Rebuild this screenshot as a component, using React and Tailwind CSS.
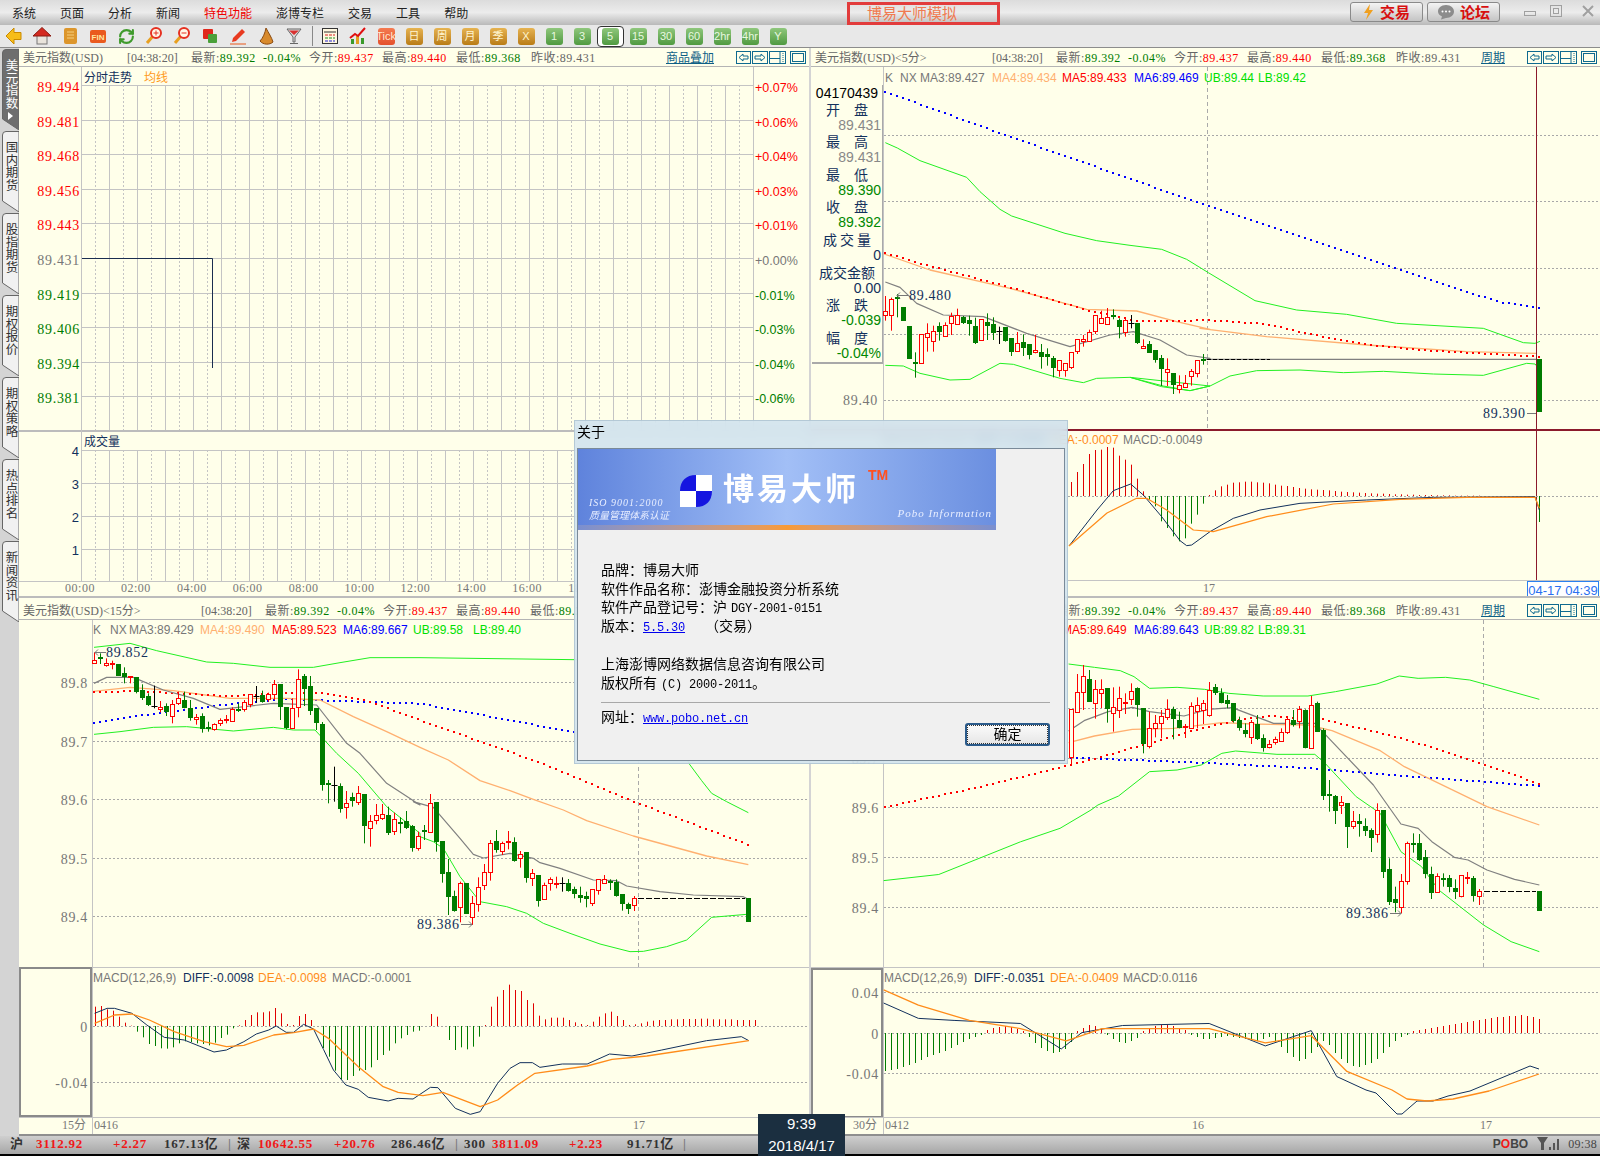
import { RefreshCw } from "lucide-react";

const PANEL = "#ffffea";
const GRID = "#c4c4c4";
const DOT = "#a8a8a8";
const NAVY = "#12305c";
const GREEN = "#007c00";
const BAND = "#22f022";
const SERIF = "[font-family:'Liberation_Serif','Noto_Sans_CJK_SC',serif]";

// reads points off the reference crops: crop position -> page position
const toPage = (ox, oy, sx, sy, list) => list.map(([x, y]) => [ox + x / sx, oy + y / sy]);

function Line({ pts, color, w = 1, dash }) {
	return (
		<polyline
			points={pts.map((p) => p.join(",")).join(" ")}
			fill="none"
			stroke={color}
			strokeWidth={w}
			strokeDasharray={dash}
			strokeLinejoin="round"
		/>
	);
}

// square dots every 6px along the line, the way the terminal plots MA lines
function Dotted({ pts, color }) {
	const dots = [];
	for (let i = 0; i < pts.length - 1; i++) {
		const [x1, y1] = pts[i];
		const [x2, y2] = pts[i + 1];
		let x = dots.length ? dots[dots.length - 1][0] + 6 : x1;
		while (x <= x2) {
			dots.push([x, y1 + ((y2 - y1) * (x - x1)) / (x2 - x1)]);
			x += 6;
		}
	}
	return dots.map(([x, y], i) => <rect key={i} x={Math.round(x)} y={Math.round(y)} width={2} height={2} fill={color} />);
}

function T({ x, y, c = "#666", size = 12, anchor = "start", serif, track, children }) {
	return (
		<text
			x={x}
			y={y}
			fill={c}
			fontSize={size}
			textAnchor={anchor}
			dominantBaseline="central"
			letterSpacing={track}
			className={serif ? SERIF : undefined}
		>
			{children}
		</text>
	);
}

function Price({ x, y, c = "#777", children }) {
	return (
		<T x={x} y={y} c={c} size={14} anchor="end" serif track={0.7}>
			{children}
		</T>
	);
}

function Arrow({ x1, x2, y }) {
	const head = x2 > x1 ? -3 : 3;
	return (
		<path d={`M${x1} ${y + 0.5} H${x2} M${x2 + head} ${y - 2.5} L${x2} ${y + 0.5} L${x2 + head} ${y + 3.5}`} fill="none" stroke="#777" />
	);
}

function HDots({ ys, x1, x2 }) {
	return ys.map((y) => <line key={y} x1={x1} x2={x2} y1={y + 0.5} y2={y + 0.5} stroke={DOT} strokeDasharray="2 2" />);
}

// [type, bodyTop, bodyBottom, high, low] in crop pixels
function Candles({ data, x0, step, oy, s = 3 }) {
	return data.map(([t, top, bot, hi, lo], i) => {
		const x = Math.round(x0 + i * step) + 0.5;
		const y1 = Math.round(oy + top / s);
		const y2 = Math.round(oy + bot / s);
		const yh = oy + hi / s;
		const yl = oy + lo / s;
		if (t === "k") {
			return (
				<g key={i} stroke="#000">
					<line x1={x} x2={x} y1={yh} y2={yl} />
					<line x1={x - 3} x2={x + 3} y1={y1 + 0.5} y2={y1 + 0.5} />
				</g>
			);
		}
		const color = t === "r" ? "#ff0000" : GREEN;
		return (
			<g key={i}>
				<line x1={x} x2={x} y1={yh} y2={yl} stroke={color} />
				{t === "r" ? (
					<rect x={x - 2} y={y1 + 0.5} width={4} height={Math.max(y2 - y1, 1)} fill={PANEL} stroke={color} />
				) : (
					<rect x={x - 2.5} y={y1} width={5} height={Math.max(y2 - y1, 2)} fill={color} />
				)}
			</g>
		);
	});
}

function Bars({ data, x0, base, k = 1 }) {
	return data.map((h, i) => {
		if (!h) return null;
		const x = Math.round(x0 + i * 6) + 0.5;
		return <line key={i} x1={x} x2={x} y1={base} y2={base - h * k} stroke={h > 0 ? "#e00000" : GREEN} />;
	});
}

function MaLegend({ y, xs, vals }) {
	return (
		<>
			<T x={xs[0]} y={y} c="#777">K</T>
			<T x={xs[1]} y={y} c="#777">NX</T>
			<T x={xs[2]} y={y} c="#777">MA3:{vals[0]}</T>
			<T x={xs[3]} y={y} c="#ffb070">MA4:{vals[1]}</T>
			<T x={xs[4]} y={y} c="#ff0000">MA5:{vals[2]}</T>
			<T x={xs[5]} y={y} c="#0000ff">MA6:{vals[3]}</T>
			<T x={xs[6]} y={y} c="#00e000">UB:{vals[4]}</T>
			<T x={xs[7]} y={y} c="#00e000">LB:{vals[5]}</T>
		</>
	);
}

function MacdLegend({ y, xs, vals }) {
	return (
		<>
			<T x={xs[0]} y={y} c="#777">MACD(12,26,9)</T>
			<T x={xs[1]} y={y} c={NAVY}>DIFF:{vals[0]}</T>
			<T x={xs[2]} y={y} c="#ff8c1a">DEA:{vals[1]}</T>
			<T x={xs[3]} y={y} c="#777">MACD:{vals[2]}</T>
		</>
	);
}

function WindowIcons() {
	return (
		<svg width="70" height="14" viewBox="0 0 70 14" fill="none" stroke="#0f6a8f">
			<rect x="0.5" y="0.5" width="14" height="12" />
			<path d="M3 6.5 L7 3 V5 H12 V8 H7 V10 Z" />
			<rect x="16.5" y="0.5" width="15" height="12" />
			<path d="M29 6.5 L25 3 V5 H19 V8 H25 V10 Z" />
			<rect x="33.5" y="0.5" width="16" height="12" />
			<path d="M33 7.5 H44 M44 1 V13" />
			<path d="M47 2 V12" strokeDasharray="1 1" />
			<rect x="54.5" y="0.5" width="15" height="12" />
			<rect x="56.5" y="2.5" width="11" height="8" />
		</svg>
	);
}

function Header({ title, titleW, link, tall }) {
	return (
		<div className={`${tall ? "h-[22px] pt-[4px]" : "h-[19px] pt-[2px]"} shrink-0 flex items-center pl-[4px] pr-[3px] border-b border-[#b4b4b4] text-[12px] text-[#666] whitespace-nowrap ${SERIF}`}>
			<div className={titleW}>{title}</div>
			<div className="w-[64px]">[04:38:20]</div>
			<div className="w-[72px] tracking-[0.5px]">最新:<span className="text-[#007c00]">89.392</span></div>
			<div className="w-[46px] tracking-[0.5px] text-[#007c00]">-0.04%</div>
			<div className="w-[73px] tracking-[0.5px]">今开:<span className="text-[#ff0000]">89.437</span></div>
			<div className="w-[74px] tracking-[0.5px]">最高:<span className="text-[#ff0000]">89.440</span></div>
			<div className="w-[75px] tracking-[0.5px]">最低:<span className="text-[#007c00]">89.368</span></div>
			<div className="tracking-[0.5px]">昨收:89.431</div>
			<div className="ml-auto mr-[22px] text-[#0f5f86] underline">{link}</div>
			<WindowIcons />
		</div>
	);
}

/* ---------- top left: time sharing ---------- */
const LEFT_PRICES = [
	["89.494", "#ff0000"], ["89.481", "#ff0000"], ["89.468", "#ff0000"], ["89.456", "#ff0000"], ["89.443", "#ff0000"],
	["89.431", "#777"], ["89.419", GREEN], ["89.406", GREEN], ["89.394", GREEN], ["89.381", GREEN],
];
const RIGHT_PCT = [
	["+0.07%", "#ff0000"], ["+0.06%", "#ff0000"], ["+0.04%", "#ff0000"], ["+0.03%", "#ff0000"], ["+0.01%", "#ff0000"],
	["+0.00%", "#777"], ["-0.01%", GREEN], ["-0.03%", GREEN], ["-0.04%", GREEN], ["-0.06%", GREEN],
];
const TIMES = ["00:00", "02:00", "04:00", "06:00", "08:00", "10:00", "12:00", "14:00", "16:00", "18:00"];

function VLines({ y1, y2 }) {
	return Array.from({ length: 49 }).map((_, i) => {
		const x = 81.5 + i * 14;
		return (
			<line key={i} x1={x} x2={x} y1={y1} y2={y2} stroke={GRID} strokeDasharray={i % 2 ? "2 2" : undefined} />
		);
	});
}

function TopLeft() {
	return (
		<div className="flex flex-col" style={{ background: PANEL }}>
			<Header title="美元指数(USD)" titleW="w-[104px]" link="商品叠加" />
			<svg width="790" height="531" viewBox="19 67 790 531" className="block">
				<VLines y1={85} y2={431} />
				<VLines y1={450} y2={581} />
				{LEFT_PRICES.map(([v, c], i) => {
					const y = Math.round(85 + i * 34.6) + 0.5;
					return (
						<g key={v}>
							<line x1={81} x2={753} y1={y} y2={y} stroke={GRID} />
							<Price x={80} y={y + 2} c={c}>{v}</Price>
							<T x={755} y={y + 2} c={RIGHT_PCT[i][1]} size={12.5}>{RIGHT_PCT[i][0]}</T>
						</g>
					);
				})}
				<line x1={753.5} x2={753.5} y1={67} y2={431} stroke={GRID} />
				<T x={84} y={78} c={NAVY}>分时走势</T>
				<T x={144} y={78} c="#ff9a1a">均线</T>
				<Line pts={[[81, 258.5], [212.5, 258.5], [212.5, 368]]} color="#1a2d50" />
				<rect x={19} y={430} width={790} height={2} fill="#bcbcbc" />
				<T x={84} y={442} c={NAVY}>成交量</T>
				{[["4", 450], ["3", 483], ["2", 516], ["1", 549]].map(([v, y]) => (
					<g key={v}>
						<line x1={81} x2={753} y1={y + 0.5} y2={y + 0.5} stroke={GRID} />
						<T x={79} y={y + 1} c={NAVY} size={13} anchor="end">{v}</T>
					</g>
				))}
				<line x1={81.5} x2={81.5} y1={67} y2={581} stroke={GRID} />
				<line x1={19} x2={809} y1={581.5} y2={581.5} stroke={GRID} />
				{TIMES.map((t, i) => (
					<T key={t} x={80 + i * 55.9} y={588} c="#777" anchor="middle" serif track={0.5}>{t}</T>
				))}
				<rect x={19} y={596} width={790} height={2} fill="#bcbcbc" />
			</svg>
		</div>
	);
}

/* ---------- top right: 5 min ---------- */
const TR_CANDLES = [
	["r",723,735,678,752],["r",688,736,683,782],["g",680,688,672,742],["g",712,752,712,752],["g",768,866,768,866],["g",877,880,847,923],
	["r",793,878,793,878],["r",788,800,760,845],["r",782,812,767,845],["g",769,787,757,812],["r",764,797,757,797],["r",738,760,728,795],
	["r",734,763,716,763],["g",741,759,738,762],["g",751,761,737,797],["g",768,820,743,822],["r",748,811,748,811],["g",757,769,730,810],
	["g",763,788,742,810],["k",783,784,770,822],["g",771,812,771,815],["g",805,846,805,858],["r",820,842,786,842],["g",817,833,793,858],
	["g",823,855,823,868],["r",841,847,794,850],["g",846,860,822,896],["g",853,860,835,887],["g",865,893,858,922],["r",871,899,871,920],
	["r",880,899,880,920],["r",847,892,847,897],["r",808,844,808,852],["r",808,812,795,830],["r",787,812,779,812],["r",736,784,736,792],
	["r",744,760,722,762],["r",741,761,714,762],["g",736,741,718,748],["g",751,770,745,805],["r",751,787,745,800],["k",758,759,735,775],
	["g",760,818,760,822],["r",829,833,808,835],["g",823,848,813,848],["g",840,870,840,878],["g",865,896,855,948],["r",898,907,865,948],
	["g",909,946,909,972],["r",946,956,916,970],["r",940,952,915,952],["r",904,918,897,947],["r",871,910,871,922],["g",866,869,852,884],
];
const a = (l) => toPage(810, 70, 3, 3, l);
const b = (l) => toPage(1100, 300, 3, 3, l);
const TR_UB = [
	...a([[226,218],[262,234],[330,272],[470,322],[510,365],[570,418],[605,438],[765,490],[860,512],[960,526],[1055,538],[1130,568],[1195,608]]),
	...b([[465,2],[590,30],[740,43],[890,70],[1150,85],[1270,128],[1305,130],[1320,124]]),
];
const TR_LB = [
	...a([[226,886],[280,888],[330,910],[420,930],[480,928],[570,880],[610,883],[750,925],[820,938],[860,925],[960,922],[1060,948],[1140,962],[1200,948]]),
	...b([[90,232],[185,260],[270,272],[330,258],[390,228],[470,212],[600,210],[730,218],[850,214],[1000,222],[1150,226],[1280,190],[1305,192],[1320,210]]),
];
const TR_GRAY = [
	...a([[226,636],[270,652],[320,700],[400,735],[520,740],[650,790],[780,830],[900,795],[970,785],[1050,810],[1130,855],[1200,865]]),
	...b([[320,178],[1310,178]]),
];
const TR_ORANGE = [
	...a([[222,552],[360,600],[600,655],[830,718],[980,723],[1100,755],[1200,778]]),
	...b([[300,85],[500,110],[800,135],[1100,155],[1310,160]]),
];
const TR_RED = [
	...a([[222,545],[330,578],[600,650],[830,718],[980,750],[1200,748]]),
	...b([[400,62],[500,70],[620,98],[800,132],[1000,150],[1318,167]]),
];
const TR_BLUE = [...a([[222,62],[600,198],[1190,405]]), ...b([[1190,2],[1318,22]])];
const TR_MACD_Y = [
	450,442,444,468,480,495,537,575,600,620,665,685,710,725,716,672,645,612,586,572,560,555,549,548,546,546,548,549,551,555,558,559,
	562,565,567,569,570,571,572,574,576,577,578,579,580,581,582,582,583,584,584,585,585,586,586,586,587,587,587,588,588,588,588,588,
];
const TR_DIFF = [[1069,546],[1097,510],...b([[40,572],[92,552],[130,585],[185,650],[240,722],[260,737],[275,735],[330,695],[400,655],[480,630],[600,610],[800,600],[1000,592],[1305,590],[1318,630]])];
const TR_DEA = [[1069,546],[1107,513],...b([[110,595],[140,595],[200,630],[280,690],[340,695],[500,650],[700,612],[900,598],[1100,592],[1305,592],[1318,625]])];

function InfoRow({ label, pad, value, c = "#888" }) {
	return (
		<>
			<div className={`mt-[2.6px] h-[16px] leading-[16px] flex justify-between text-[#12305c] text-[14px] ${pad}`}>
				{label.split("").map((ch) => (
					<span key={ch}>{ch}</span>
				))}
			</div>
			<div className="h-[14px] leading-[14px] text-right text-[14px]" style={{ color: c }}>{value}</div>
		</>
	);
}

function TopRight() {
	return (
		<div className="relative flex flex-col" style={{ background: PANEL }}>
			<Header title="美元指数(USD)<5分>" titleW="w-[177px]" link="周期" />
			<svg width="789" height="531" viewBox="811 67 789 531" className="block">
				<HDots ys={[135, 201, 268, 334, 400]} x1={884} x2={1600} />
				<line x1={1207.5} x2={1207.5} y1={67} y2={430} stroke="#aaa" strokeDasharray="4 3" />
				<line x1={883.5} x2={883.5} y1={67} y2={581} stroke={GRID} />
				<MaLegend y={78} xs={[885, 900, 920, 992, 1062, 1134, 1204, 1258]} vals={["89.427", "89.434", "89.433", "89.469", "89.44", "89.42"]} />
				<Dotted pts={TR_BLUE} color="#0000ff" />
				<Line pts={TR_UB} color={BAND} />
				<Line pts={TR_LB} color={BAND} />
				<Line pts={TR_ORANGE} color="#ffb070" w={1.3} />
				<Dotted pts={TR_RED} color="#ff0000" />
				<Line pts={TR_GRAY} color="#808080" w={1.2} />
				<Candles data={TR_CANDLES} x0={885.3} step={6} oy={70} />
				<line x1={1207} x2={1270} y1={359.5} y2={359.5} stroke="#000" strokeDasharray="4 2" />
				<rect x={1537} y={359} width={5} height={53} fill={GREEN} />
				<Price x={878} y={400}>89.40</Price>
				<Arrow x1={908} x2={897} y={295} />
				<T x={909} y={295} c={NAVY} size={14} serif track={0.7}>89.480</T>
				<T x={1483} y={413} c={NAVY} size={14} serif track={0.7}>89.390</T>
				<line x1={1527} x2={1537} y1={413.5} y2={413.5} stroke="#777" />
				<rect x={811} y={429} width={789} height={2} fill="#8b1a2b" />
				<line x1={1536.5} x2={1536.5} y1={67} y2={580} stroke="#8b1a2b" />
				<HDots ys={[496]} x1={884} x2={1600} />
				<Bars data={[14, 24, 32, 42, 46]} x0={1071} base={496} />
				<Bars data={TR_MACD_Y.map((y) => (589 - y) / 3)} x0={1101} base={496} />
				<line x1={1539.5} x2={1539.5} y1={496} y2={522} stroke={GREEN} />
				<Line pts={TR_DIFF} color={NAVY} />
				<Line pts={TR_DEA} color="#ff8c1a" w={1.2} />
				<MacdLegend y={440} xs={[884, 974, 1050, 1123]} vals={["-0.0056", "-0.0007", "-0.0049"]} />
				<line x1={811} x2={1600} y1={580.5} y2={580.5} stroke={GRID} />
				<T x={1209} y={588} c="#777" anchor="middle" serif>17</T>
				<rect x={1527.5} y={581.5} width={71} height={16} fill="#fff" stroke="#2a80f0" />
				<T x={1563} y={590} c="#2a70f0" size={13} anchor="middle">04-17 04:39</T>
				<rect x={811} y={596} width={789} height={2} fill="#bcbcbc" />
			</svg>
			{/* data window over the chart */}
			<div className="absolute left-[1px] top-[37px] w-[71px] h-[279px] px-[1px] border-b-2 border-r border-[#a9a9a9]" style={{ background: PANEL }}>
				<div className="h-[14px] leading-[16px] text-black text-[14px] text-center">04170439</div>
				<InfoRow label="开盘" pad="px-[13px]" value="89.431" />
				<InfoRow label="最高" pad="px-[13px]" value="89.431" />
				<InfoRow label="最低" pad="px-[13px]" value="89.390" c="#008800" />
				<InfoRow label="收盘" pad="px-[13px]" value="89.392" c="#008800" />
				<InfoRow label="成交量" pad="px-[10px]" value="0" c="#12305c" />
				<InfoRow label="成交金额" pad="px-[6px]" value="0.00" c="#12305c" />
				<InfoRow label="涨跌" pad="px-[13px]" value="-0.039" c="#008800" />
				<InfoRow label="幅度" pad="px-[13px]" value="-0.04%" c="#008800" />
			</div>
		</div>
	);
}

/* ---------- bottom left: 15 min ---------- */
const BL_CANDLES = [
	["r",120,130,97,130],["g",112,116,100,132],["r",130,136,115,140],["r",130,133,122,148],["g",132,167,132,167],["g",159,172,142,190],
	["r",169,172,169,190],["g",172,215,172,220],["g",209,233,193,240],["g",228,255,220,258],["k",257,258,197,265],["r",262,267,243,277],
	["g",258,275,250,288],["r",253,287,240,310],["r",235,250,215,255],["g",240,263,215,265],["g",264,293,240,302],["r",292,296,282,314],
	["g",288,326,280,338],["g",322,325,305,335],["r",313,327,310,332],["r",299,308,295,318],["r",297,301,285,310],["r",266,302,262,302],
	["g",268,272,250,276],["r",245,267,240,275],["r",223,252,222,262],["k",229,230,198,248],["g",226,245,212,248],["r",223,236,218,245],
	["r",193,222,180,240],["g",192,260,192,300],["g",262,325,262,328],["r",265,325,235,325],["r",178,262,148,292],["g",168,207,162,258],
	["g",198,272,168,285],["g",264,308,264,330],["g",312,494,306,512],["g",490,493,480,550],["k",495,496,440,545],["g",498,566,490,578],
	["r",550,560,513,596],["g",531,542,518,560],["r",520,545,498,555],["g",522,617,522,670],["r",604,625,585,680],["r",586,601,552,613],
	["r",583,593,552,600],["g",585,638,560,645],["r",598,634,578,645],["g",605,606,592,640],["g",604,624,573,627],["g",618,683,615,695],
	["r",647,685,635,692],
];
const BL_CANDLES2 = [
	["g",210,214,195,240],["r",130,217,102,217],["g",127,245,127,275],["g",243,343,243,368],["g",337,412,297,465],["g",408,453,392,455],
	["r",370,442,365,487],["g",370,462,370,462],["r",430,472,408,495],["r",380,432,352,455],["r",335,376,312,390],["r",248,337,240,362],
	["g",243,270,210,278],["r",250,272,245,285],["r",244,247,213,268],["g",246,302,232,305],["r",283,295,273,323],["g",276,353,276,368],
	["r",338,355,327,378],["g",346,422,346,440],["r",376,418,368,418],["r",358,370,352,392],["r",368,371,350,385],["k",369,370,352,395],
	["g",370,393,357,395],["g",388,402,380,415],["g",405,413,380,428],["g",408,416,395,442],["r",388,430,388,438],["r",358,391,358,404],
	["r",358,368,345,370],["g",362,368,358,390],["g",366,408,358,410],["g",403,431,403,452],["g",432,446,428,462],["r",414,436,408,453],
];
const c8 = (l) => toPage(20, 620, 3, 3, l);
const c10 = (l) => toPage(400, 760, 3, 3, l);
const BL_UB = [
	...c8([[222,82],[330,70],[410,92],[560,126],[640,130],[750,142],[880,142],[960,128],[1050,113],[1200,113]]),
	[600, 660], [660, 700],
	...c10([[868,12],[905,62],[935,100],[980,125],[1045,158]]),
];
const BL_LB = [
	...c8([[222,343],[300,335],[400,322],[500,320],[640,333],[760,322],[820,330],[885,330],[950,400],[1015,460],[1100,560],[1200,640]]),
	...c10([[60,230],[100,245],[130,265],[180,350],[240,425],[320,440],[380,460],[430,490],[510,520],[600,552],[690,575],[730,574],[800,560],[860,540],[935,472],[1040,463]]),
];
const BL_GRAY = [
	...c8([[222,190],[260,172],[340,172],[430,210],[520,235],[600,268],[760,250],[890,255],[980,370],[1020,400],[1100,490],[1200,555]]),
	...c10([[40,125],[100,142],[180,235],[220,283],[250,294],[330,280],[400,295],[420,308],[480,325],[580,360],[650,362],[680,378],[780,395],[880,405],[1030,410],[1045,418]]),
];
const BL_ORANGE = [
	...c8([[220,214],[330,202],[460,212],[630,235],[800,235],[900,240],[1000,290],[1100,335],[1200,382]]),
	...c10([[145,0],[240,62],[330,92],[400,118],[490,150],[560,182],[700,228],[810,258],[920,288],[1045,314]]),
];
const BL_RED = [...c8([[220,214],[350,210],[620,225],[840,215],[900,215],[1040,240],[1200,298]]), ...c10([[410,2],[700,122],[1045,252]])];
const BL_BLUE = [...c8([[220,305],[420,275],[640,248],[800,235],[1200,248]]), [572, 731], [600, 738]];
const BL_BARS = [
	58,60,50,46,28,10,1,-17,-34,-54,-60,-67,-68,-64,-52,-46,-48,-52,-54,-58,-50,-36,-26,-7,2,18,33,41,41,44,54,38,6,3,30,36,18,0,
	-66,-92,-134,-160,-162,-150,-134,-132,-124,-102,-87,-74,-52,-37,-27,-17,-14,0,36,28,0,-42,-72,-64,-70,-62,-32,3,58,88,108,124,
	108,105,78,68,31,20,25,25,25,18,11,6,3,13,28,38,43,30,18,3,5,8,13,16,18,18,20,20,21,21,21,22,22,20,20,20,20,18,18,18,18,
];
const d = (l) => toPage(20, 960, 2.01, 3, l);
const BL_DIFF = d([[150,160],[175,145],[190,145],[225,160],[255,195],[290,232],[330,240],[360,258],[390,276],[415,270],[450,245],[475,222],[500,210],[515,198],[535,217],[550,217],[570,193],[590,207],[610,268],[630,330],[655,375],[680,388],[700,412],[740,423],[760,415],[790,417],[825,382],[840,383],[875,445],[905,463],[925,455],[960,370],[985,325],[1005,308],[1030,308],[1045,322],[1090,312],[1140,312],[1185,282],[1230,288],[1290,270],[1380,242],[1450,230],[1465,242]]);
const BL_DEA = d([[150,190],[190,165],[225,162],[260,180],[310,215],[370,245],[415,260],[450,256],[510,225],[550,218],[590,207],[620,235],[680,320],[730,380],[760,397],[810,407],[850,397],[925,440],[960,420],[1000,375],[1035,340],[1140,318],[1190,298],[1260,288],[1465,242]]);

function BottomLeft() {
	return (
		<div className="flex flex-col" style={{ background: PANEL }}>
			<Header tall title="美元指数(USD)<15分>" titleW="w-[178px]" link="周期" />
			<svg width="790" height="516" viewBox="19 620 790 516" className="block">
				<line x1={92.5} x2={92.5} y1={620} y2={1134} stroke={GRID} />
				<HDots ys={[682, 741, 799, 858, 916]} x1={93} x2={809} />
				{[["89.8", 682], ["89.7", 741], ["89.6", 799], ["89.5", 858], ["89.4", 916]].map(([v, y]) => (
					<Price key={v} x={88} y={y + 1}>{v}</Price>
				))}
				<line x1={638.5} x2={638.5} y1={620} y2={967} stroke="#aaa" strokeDasharray="4 3" />
				<MaLegend y={630} xs={[93, 110, 129, 200, 272, 343, 413, 473]} vals={["89.429", "89.490", "89.523", "89.667", "89.58", "89.40"]} />
				<Dotted pts={BL_BLUE} color="#0000ff" />
				<Line pts={BL_UB} color={BAND} />
				<Line pts={BL_LB} color={BAND} />
				<Line pts={BL_ORANGE} color="#ffb070" w={1.3} />
				<Dotted pts={BL_RED} color="#ff0000" />
				<Line pts={BL_GRAY} color="#808080" w={1.2} />
				<Candles data={BL_CANDLES} x0={94.3} step={6} oy={620} />
				<Candles data={BL_CANDLES2} x0={424.3} step={6} oy={760} />
				<line x1={638} x2={745} y1={898.5} y2={898.5} stroke="#000" strokeDasharray="6 2" />
				<rect x={746} y={898} width={5} height={24} fill={GREEN} />
				<Arrow x1={106} x2={95} y={652} />
				<T x={106} y={652} c={NAVY} size={14} serif track={0.7}>89.852</T>
				<T x={417} y={924} c={NAVY} size={14} serif track={0.7}>89.386</T>
				<Arrow x1={461} x2={472} y={924} />
				<line x1={19} x2={809} y1={967.5} y2={967.5} stroke={GRID} />
				<rect x={20} y={968} width={71} height={148} fill={PANEL} stroke="#8a8a8a" strokeWidth={2} />
				<HDots ys={[1026, 1082]} x1={93} x2={809} />
				<Price x={88} y={1027}>0</Price>
				<Price x={88} y={1083}>-0.04</Price>
				<MacdLegend y={978} xs={[93, 183, 258, 332]} vals={["-0.0098", "-0.0098", "-0.0001"]} />
				<Bars data={BL_BARS} x0={94.6} base={1026} k={1 / 3} />
				<Line pts={BL_DIFF} color={NAVY} />
				<Line pts={BL_DEA} color="#ff8c1a" w={1.3} />
				<line x1={19} x2={809} y1={1117.5} y2={1117.5} stroke={GRID} />
				<T x={86} y={1125} c="#777" anchor="end" serif>15分</T>
				<T x={94} y={1125} c="#777" serif>0416</T>
				<T x={633} y={1125} c="#777" serif>17</T>
				<rect x={19} y={1134} width={790} height={2} fill="#8f8f8f" />
			</svg>
		</div>
	);
}

/* ---------- bottom right: 30 min ---------- */
const BR_CANDLES = [
	["r",148,292,148,315],["r",95,155,42,155],["r",48,95,15,150],["g",57,125,30,125],["r",88,128,60,176],["r",88,100,58,144],["g",85,147,85,188],
	["r",140,160,82,215],["r",115,150,80,174],["r",125,128,100,162],["r",92,118,70,135],["g",85,135,82,170],["g",145,253,145,280],["r",203,257,155,265],
	["r",188,203,165,232],["r",167,188,150,235],["r",146,170,118,180],["g",148,177,140,238],["g",181,204,155,205],["r",197,200,192,234],["r",137,205,127,205],
	["r",136,152,112,205],["r",128,150,120,192],["r",90,166,66,170],["g",82,98,72,105],["g",100,128,85,130],["g",120,132,105,145],["g",129,183,129,188],
	["g",180,203,170,212],["g",210,222,190,232],["r",185,230,180,252],["g",192,237,165,240],["g",235,263,223,275],["r",253,260,240,265],["r",238,247,230,254],
	["r",217,242,205,242],["r",176,215,172,222],["g",180,195,150,200],["r",148,184,138,205],["g",150,265,148,265],["r",136,263,108,263],["g",129,215,125,215],
	["g",210,407,205,420],["g",403,406,360,455],["g",408,452,405,492],["r",427,436,408,462],["g",430,500,430,564],["r",482,497,453,507],["g",484,493,462,530],
	["g",498,512,475,528],["g",510,534,505,576],["r",451,521,430,548],["g",450,635,450,654],["g",627,725,595,735],["g",718,730,680,757],["r",664,742,642,760],
	["r",550,662,545,674],["g",550,556,520,578],["g",550,600,522,603],["g",592,642,570,655],["g",643,698,620,717],["r",647,697,640,697],["g",655,658,640,680],
	["g",655,682,645,697],["g",685,695,658,717],["r",646,707,646,712],["r",652,655,636,672],["g",655,708,648,725],["r",694,709,687,735],
];
const e = (l) => toPage(1060, 660, 2.904, 3, l);
const m = (l) => toPage(0, 0, 0.98, 0.98, l);
const BR_UB = e([[25,12],[100,22],[175,32],[215,50],[260,85],[340,82],[420,88],[490,100],[590,108],[720,108],[800,95],[920,72],[985,48],[1040,55],[1120,52],[1190,60],[1260,80],[1392,118]]);
const BR_LB = [...m([[866,863],[920,857],[1000,825]]), ...e([[0,505],[90,450],[110,435],[170,408],[260,335],[340,330],[410,315],[470,280],[510,273],[630,283],[740,283],[770,310],[860,410],[930,460],[990,575],[1050,620],[1100,690],[1230,795],[1310,845],[1392,875]])];
const BR_GRAY = e([[25,213],[70,182],[140,155],[210,142],[260,155],[360,168],[430,148],[500,143],[620,190],[740,190],[790,245],[910,375],[990,492],[1040,505],[1080,545],[1145,592],[1185,600],[1240,630],[1320,658],[1392,675]]);
const BR_ORANGE = e([[25,248],[100,228],[210,208],[330,205],[470,188],[560,192],[720,195],[790,212],[930,272],[1000,320],[1150,395],[1240,440],[1392,495]]);
const BR_RED = [...m([[866,790],[960,770]]), ...e([[15,315],[100,293],[250,248],[380,210],[500,180],[600,165],[760,175],[990,232],[1200,300],[1392,370]])];
const BR_BLUE = e([[30,290],[400,305],[700,320],[1000,345],[1392,375]]);
const BR_BARS = [
	-38,-37,-36,-34,-32,-30,-27,-24,-22,-20,-18,-15,-12,-9,-6,-4,-2,3,5,6,7,6,4,2,-4,-10,-15,-18,-20,-19,-16,-9,2,5,8,7,4,-2,
	-6,-9,-10,-8,-5,2,5,7,8,8,7,5,3,-2,-4,-6,-6,-5,-4,-3,-4,-5,-6,-7,-8,-6,-4,-8,-14,-20,-24,-28,-26,-20,-14,-8,-12,-20,-26,-30,
	-33,-34,-32,-30,-26,-20,-14,-8,-4,-2,2,3,4,5,6,7,8,9,10,11,12,13,14,15,16,16,17,17,18,17,16,14,
];
const BR_DIFF = [...m([[866,983],[900,998],[935,1000],[1000,1003],[1040,1028],[1060,1012],[1100,1005],[1185,1003],[1240,1025],[1285,1010],[1310,1055]]), [1366,1090],[1376,1093],[1397,1114],[1402,1114],[1417,1101],[1433,1101],[1448,1096],[1470,1091],[1530,1066],[1539,1069]];
const BR_DEA = [...m([[866,970],[900,985],[950,1000],[1000,1008],[1045,1020],[1080,1008],[1185,1008],[1240,1022],[1285,1015],[1320,1050]]), [1392,1090],[1407,1099],[1427,1101],[1453,1099],[1489,1091],[1539,1074]];

function BottomRight() {
	return (
		<div className="flex flex-col" style={{ background: PANEL }}>
			<Header tall title="美元指数(USD)<30分>" titleW="w-[177px]" link="周期" />
			<svg width="789" height="516" viewBox="811 620 789 516" className="block">
				<line x1={883.5} x2={883.5} y1={620} y2={1134} stroke={GRID} />
				<HDots ys={[708, 758, 807, 857, 907]} x1={884} x2={1600} />
				{[["89.8", 708], ["89.7", 758], ["89.6", 807], ["89.5", 857], ["89.4", 907]].map(([v, y]) => (
					<Price key={v} x={879} y={y + 1}>{v}</Price>
				))}
				<line x1={1483.5} x2={1483.5} y1={620} y2={967} stroke="#aaa" strokeDasharray="4 3" />
				<MaLegend y={630} xs={[885, 900, 920, 992, 1062, 1134, 1204, 1258]} vals={["89.514", "89.578", "89.649", "89.643", "89.82", "89.31"]} />
				<Dotted pts={BR_BLUE} color="#0000ff" />
				<Line pts={BR_UB} color={BAND} />
				<Line pts={BR_LB} color={BAND} />
				<Line pts={BR_ORANGE} color="#ffb070" w={1.3} />
				<Dotted pts={BR_RED} color="#ff0000" />
				<Line pts={BR_GRAY} color="#808080" w={1.2} />
				<Candles data={BR_CANDLES} x0={1071.4} step={6} oy={660} />
				<line x1={1484} x2={1536} y1={891.5} y2={891.5} stroke="#000" strokeDasharray="6 2" />
				<rect x={1537} y={891} width={5} height={20} fill={GREEN} />
				<T x={1346} y={913} c={NAVY} size={14} serif track={0.7}>89.386</T>
				<Arrow x1={1390} x2={1401} y={913} />
				<line x1={811} x2={1600} y1={967.5} y2={967.5} stroke={GRID} />
				<rect x={812} y={969} width={70} height={148} fill={PANEL} stroke="#8a8a8a" strokeWidth={2} />
				<HDots ys={[992, 1033, 1073]} x1={884} x2={1600} />
				<Price x={879} y={993}>0.04</Price>
				<Price x={879} y={1034}>0</Price>
				<Price x={879} y={1074}>-0.04</Price>
				<MacdLegend y={978} xs={[884, 974, 1050, 1123]} vals={["-0.0351", "-0.0409", "0.0116"]} />
				<Bars data={BR_BARS} x0={885} base={1033} />
				<Line pts={BR_DIFF} color={NAVY} />
				<Line pts={BR_DEA} color="#ff8c1a" w={1.3} />
				<line x1={811} x2={1600} y1={1117.5} y2={1117.5} stroke={GRID} />
				<T x={877} y={1125} c="#777" anchor="end" serif>30分</T>
				<T x={885} y={1125} c="#777" serif>0412</T>
				<T x={1192} y={1125} c="#777" serif>16</T>
				<T x={1480} y={1125} c="#777" serif>17</T>
				<rect x={811} y={1134} width={789} height={2} fill="#8f8f8f" />
			</svg>
		</div>
	);
}

/* ---------- chrome ---------- */
const MENU = ["系统", "页面", "分析", "新闻", "特色功能", "澎博专栏", "交易", "工具", "帮助"];

function TitleBar() {
	return (
		<div className="h-[25px] shrink-0 flex items-start bg-linear-to-b from-[#dcdcdc] via-[#ececec] to-[#b9b9b9]">
			<div className="w-[847px] h-full flex items-center gap-6 pl-3 pt-[2px] text-[12px] text-[#222]">
				{MENU.map((t) => (
					<span key={t} className={t === "特色功能" ? "text-[#f00000]" : ""}>{t}</span>
				))}
			</div>
			<div className="w-[153px] h-[23px] mt-[2px] border-[3px] border-[#e23c3c] pl-[17px] text-[15px] leading-[17px] text-[#f07a50]">博易大师模拟</div>
			<div className="ml-[350px] mt-[2px] w-[73px] h-[20px] flex items-center justify-center gap-[6px] rounded-[3px] border border-[#8a8a8a] bg-linear-to-b from-[#f4f4f4] to-[#c4c4c4]">
				<svg width="11" height="16" viewBox="0 0 11 16"><path d="M7 0 L1 9 H5 L3 16 L10 6 H6 Z" fill="#f0a020" /></svg>
				<span className="text-[15px] font-bold text-[#d81010] leading-none">交易</span>
			</div>
			<div className="ml-[4px] mt-[2px] w-[73px] h-[20px] flex items-center justify-center gap-[5px] rounded-[3px] border border-[#8a8a8a] bg-linear-to-b from-[#f4f4f4] to-[#c4c4c4]">
				<svg width="18" height="16" viewBox="0 0 18 16">
					<path d="M9 1 C14 1 17 4 17 7.5 C17 11 14 14 9 14 L4 15.5 L5 12.5 C2.5 11.5 1 9.5 1 7.5 C1 4 4 1 9 1 Z" fill="#8c8c8c" />
					<circle cx="5.5" cy="7.5" r="1" fill="#fff" /><circle cx="9" cy="7.5" r="1" fill="#fff" /><circle cx="12.5" cy="7.5" r="1" fill="#fff" />
				</svg>
				<span className="text-[15px] font-bold text-[#d81010] leading-none">论坛</span>
			</div>
			<svg width="100" height="25" viewBox="0 0 100 25" fill="none" stroke="#a0a0a0" className="block">
				<rect x="24.5" y="11.5" width="11" height="4" />
				<rect x="50.5" y="5.5" width="11" height="11" />
				<rect x="53.5" y="8.5" width="5" height="5" />
				<path d="M83 6 L93 16 M93 6 L83 16" strokeWidth="2" />
			</svg>
		</div>
	);
}

const AMBER = "bg-linear-to-b from-[#e6b350] to-[#b97c14] text-[#fff5d0]";
const LEAF = "bg-linear-to-b from-[#8fc77c] to-[#4f9a40] text-[#e8f8e0]";

function Btn({ tone, children }) {
	return (
		<div className={`w-[17px] h-[17px] rounded-[3px] flex items-center justify-center text-[11px] leading-none whitespace-nowrap overflow-hidden ${tone}`}>
			{children}
		</div>
	);
}

function Tool({ children }) {
	return <div className="w-[28px] h-[22px] shrink-0 flex items-center justify-center">{children}</div>;
}

const TOOL_SVGS = [
	<path key="0" d="M2 10 L10 2 V6.5 H17 V13.5 H10 V18 Z" fill="#f7bd1a" stroke="#c98a00" />,
	<g key="1"><rect x="5" y="9" width="10" height="9" fill="#e9e4dc" stroke="#777" /><path d="M10 1.5 L19 10 H1 Z" fill="#d42a20" stroke="#8a1a10" /></g>,
	<g key="2"><rect x="4" y="2" width="13" height="16" rx="2" fill="#dc962c" /><path d="M7 6 H14 M7 9 H14 M7 12 H14" stroke="#f5cf7f" /></g>,
	<g key="3"><rect x="2" y="4" width="16" height="13" rx="2" fill="#ea5a1e" /><text x="10" y="14" fontSize="8" fontWeight="700" fill="#ffe9a0" textAnchor="middle">FIN</text></g>,
	null,
	<g key="5"><path d="M9 10 L3 17" stroke="#e8a020" strokeWidth="3" /><circle cx="12" cy="7" r="5" fill="#fff8e8" stroke="#e63020" strokeWidth="2" /><path d="M9.5 7 H14.5 M12 4.5 V9.5" stroke="#e63020" /></g>,
	<g key="6"><path d="M9 10 L3 17" stroke="#e8a020" strokeWidth="3" /><circle cx="12" cy="7" r="5" fill="#fff8e8" stroke="#e63020" strokeWidth="2" /><path d="M9.5 7 H14.5" stroke="#e63020" /></g>,
	<g key="7"><rect x="3" y="3" width="10" height="10" rx="1" fill="#e0281c" /><rect x="8" y="8" width="9" height="9" rx="1" fill="#4aa03a" /></g>,
	<g key="8"><path d="M14 3 L17 6 L8 15 L4 16 L5 12 Z" fill="#e83a20" /><path d="M2 18 H18" stroke="#e8a080" strokeWidth="2" /></g>,
	<path key="9" d="M10 2 C12 6 16 12 17 16 C14 19 7 19 4 15 C7 12 9 7 10 2 Z" fill="#d88a2c" stroke="#8a4a10" />,
	<g key="10"><path d="M3 3 H17 L11 11 V16 H9 V11 Z" fill="#ddd" stroke="#666" /><path d="M5 4.5 H15 L10 9 Z" fill="#d83030" /><path d="M6 17.5 H14" stroke="#666" /></g>,
	<g key="11"><rect x="2.5" y="2.5" width="15" height="15" fill="#fff8e0" stroke="#333" /><path d="M4 6 H16" stroke="#333" /><path d="M5 9 H15" stroke="#d82020" strokeDasharray="3 1" /><path d="M5 12 H15" stroke="#209020" strokeDasharray="3 1" /><path d="M5 15 H15" stroke="#2020d0" strokeDasharray="3 1" /></g>,
	<g key="12"><rect x="3" y="13" width="3" height="5" fill="#3a9a2a" /><rect x="8" y="10" width="3" height="8" fill="#e0a020" /><rect x="13" y="12" width="3" height="6" fill="#3a9a2a" /><path d="M2 12 L7 8 L10 10 L17 2" stroke="#e01010" strokeWidth="2" fill="none" /></g>,
];

function Toolbar() {
	return (
		<div className="h-[23px] shrink-0 flex items-center bg-[#e8e8e8] border-b border-[#8c8c8c]">
			{TOOL_SVGS.slice(0, 11).map((s, i) => (
				<Tool key={i}>
					{s ? <svg width="20" height="20" viewBox="0 0 20 20">{s}</svg> : <RefreshCw size={17} color="#3f9a2c" strokeWidth={3} />}
				</Tool>
			))}
			<div className="w-[8px] h-[20px] shrink-0 flex justify-center"><div className="w-px h-full bg-[#888]" /></div>
			{TOOL_SVGS.slice(11).map((s, i) => (
				<Tool key={i}><svg width="20" height="20" viewBox="0 0 20 20">{s}</svg></Tool>
			))}
			<Tool><Btn tone="bg-linear-to-b from-[#f47a50] to-[#e4502c] text-[#ffe6d0] text-[9px]">Tick</Btn></Tool>
			{["日", "周", "月", "季", "X"].map((t) => (
				<Tool key={t}><Btn tone={AMBER}>{t}</Btn></Tool>
			))}
			{["1", "3"].map((t) => (
				<Tool key={t}><Btn tone={LEAF}>{t}</Btn></Tool>
			))}
			<Tool>
				<div className="w-[27px] h-[21px] flex items-center justify-center rounded-[4px] border border-[#333] bg-white">
					<Btn tone={LEAF}>5</Btn>
				</div>
			</Tool>
			{["15", "30", "60", "2hr", "4hr", "Y"].map((t) => (
				<Tool key={t}><Btn tone={LEAF}>{t}</Btn></Tool>
			))}
		</div>
	);
}

const TABS = ["美元指数", "国内期货", "股指期货", "期权报价", "期权策略", "热点排名", "新闻资讯"];

function SideTabs() {
	return (
		<div className="w-[19px] shrink-0 flex flex-col bg-[#d4d4d4]">
			{TABS.map((t, i) => (
				<div key={t} className="relative w-[19px] h-[82px] shrink-0">
					<svg width="19" height="82" viewBox="0 0 19 82" className="absolute inset-0">
						<path d="M2.5 5 Q2.5 1.5 6 1.5 H19 V82 L2.5 71 Z" fill={i === 0 ? "#6e6e6e" : "#f1f1f1"} stroke="#666" />
					</svg>
					<div className={`relative pt-[11px] pl-[2.5px] text-[12.5px] leading-[16px] [writing-mode:vertical-rl] ${i === 0 ? "text-white" : "text-[#333]"}`}>
						{t}
					</div>
					{i === 0 && <div className="absolute left-[8px] top-[64px] w-0 h-0 border-y-[4px] border-y-transparent border-l-[5px] border-l-white" />}
				</div>
			))}
		</div>
	);
}

function Cell({ w, c = "text-[#333]", children }) {
	return <span className={`${w} shrink-0 ${c}`}>{children}</span>;
}

function StatusBar() {
	const red = "text-[#f01818]";
	return (
		<div className={`h-[20px] shrink-0 flex items-center pl-[10px] pb-[2px] text-[13px] font-bold tracking-[0.8px] border-b-2 border-black bg-linear-to-b from-[#cfcfcf] to-[#a6a6a6] whitespace-nowrap ${SERIF}`}>
			<Cell w="w-[26px]">沪</Cell>
			<Cell w="w-[77px]" c={red}>3112.92</Cell>
			<Cell w="w-[51px]" c={red}>+2.27</Cell>
			<Cell w="w-[64px]">167.13亿</Cell>
			<Cell w="w-[9px]" c="text-[#777]">|</Cell>
			<Cell w="w-[21px]">深</Cell>
			<Cell w="w-[76px]" c={red}>10642.55</Cell>
			<Cell w="w-[57px]" c={red}>+20.76</Cell>
			<Cell w="w-[64px]">286.46亿</Cell>
			<Cell w="w-[9px]" c="text-[#777]">|</Cell>
			<Cell w="w-[28px]">300</Cell>
			<Cell w="w-[77px]" c={red}>3811.09</Cell>
			<Cell w="w-[58px]" c={red}>+2.23</Cell>
			<Cell w="w-[56px]">91.71亿</Cell>
			<Cell w="w-[9px]" c="text-[#777]">|</Cell>
			<div className="ml-auto flex items-center pr-[3px] font-normal">
				<span className="font-bold text-[#444] text-[12px] tracking-[0px] [font-family:'Liberation_Sans',sans-serif]">P<span className="text-[#f01818]">O</span>BO</span>
				<svg width="22" height="14" viewBox="0 0 22 14" className="mx-[9px]">
					<path d="M0 0 H11 L7 6 V13 H4 V6 Z" fill="#555" />
					<rect x="12" y="10" width="2" height="3" fill="#555" /><rect x="16" y="6" width="2" height="7" fill="#555" /><rect x="20" y="2" width="2" height="11" fill="#555" />
				</svg>
				<span className="text-[#444] text-[12px] tracking-[0.3px]">09:38</span>
			</div>
		</div>
	);
}

function AboutLine({ children }) {
	return <div className="h-[18.6px]">{children}</div>;
}

function AboutDialog() {
	const code = "[font-family:'Liberation_Mono',monospace] text-[12px] tracking-[-0.2px]";
	return (
		<div className="absolute left-[574px] top-[420px] w-[494px] h-[344px] px-[2px] pb-[2px] flex flex-col bg-[#cfe2ee]/85 backdrop-blur-[6px] border border-[#9fb6c6]/60 text-black">
			<div className="h-[27px] shrink-0 text-[14px] leading-[22px]">关于</div>
			<div className="flex-1 bg-[#f0f0f0] border border-[#7a8a98] text-[14px] leading-[18.6px]">
				<div className="relative w-[418px] h-[81px] overflow-hidden bg-linear-to-r from-[#5f83dc] via-[#a2bff6] to-[#6b8fe0]">
					<svg width="34" height="32" viewBox="0 0 34 32" className="absolute left-[102px] top-[26px]">
						<path d="M0 16 C0 6 6 0 16 0 V16 Z" fill="#1515e0" />
						<rect x="16" y="0" width="16" height="16" fill="#fff" />
						<rect x="0" y="16" width="16" height="16" fill="#fff" />
						<path d="M16 16 H32 C32 26 26 32 16 32 Z" fill="#1515e0" />
					</svg>
					<div className="absolute left-[145px] top-[20px] text-[31px] leading-[42px] font-bold tracking-[3px] text-white whitespace-nowrap">博易大师</div>
					<div className="absolute left-[290px] top-[18px] text-[14px] leading-[16px] font-bold text-[#ff5020]">TM</div>
					<div className={`absolute left-[11px] top-[47px] text-[10px] leading-[13px] italic text-[#e8eeff] tracking-[1px] ${SERIF}`}>ISO 9001:2000<br /><span className="tracking-[0px]">质量管理体系认证</span></div>
					<div className={`absolute right-[4px] top-[58px] text-[11px] leading-[13px] italic text-[#e8eeff] tracking-[1px] ${SERIF}`}>Pobo Information</div>
					<div className="absolute left-0 right-0 bottom-0 h-[5px] bg-linear-to-r from-[#7a8fd0] via-[#f79a35] to-[#7a8fd0]" />
				</div>
				<div className="pl-[23px] pt-[31px] pr-[14px]">
					<AboutLine>品牌：博易大师</AboutLine>
					<AboutLine>软件作品名称：澎博金融投资分析系统</AboutLine>
					<AboutLine>软件产品登记号：沪 <span className={code}>DGY-2001-0151</span></AboutLine>
					<AboutLine>版本：<span className={`${code} text-[#0000ee] underline`}>5.5.30</span><span className="ml-[20px]">（交易）</span></AboutLine>
					<div className="mt-[20px]" />
					<AboutLine>上海澎博网络数据信息咨询有限公司</AboutLine>
					<AboutLine>版权所有 <span className={code}>(C) 2000-2011</span>。</AboutLine>
					<div className="mt-[9px] border-t border-[#a8a8a8] pt-[5px] flex items-start justify-between">
						<div>网址：<span className={`${code} text-[#0000ee] underline`}>www.pobo.net.cn</span></div>
						<div className="mt-[15px] w-[85px] h-[23px] flex items-center justify-center rounded-[3px] border-2 border-[#2a5a8a] outline-1 outline-dotted -outline-offset-3 outline-[#333] bg-linear-to-b from-[#fbfbfb] to-[#e6e6e6]">确定</div>
					</div>
				</div>
			</div>
		</div>
	);
}

export default function App() {
	return (
		<div className="relative w-[1600px] h-[1156px] overflow-hidden flex flex-col bg-[#d4d4d4] [font-family:'Liberation_Sans','Noto_Sans_CJK_SC',sans-serif]">
			<TitleBar />
			<Toolbar />
			<div className="flex-1 flex min-h-0">
				<SideTabs />
				<div className="grid grid-cols-[790px_789px] grid-rows-[550px_538px] gap-x-[2px]">
					<TopLeft />
					<TopRight />
					<BottomLeft />
					<BottomRight />
				</div>
			</div>
			<StatusBar />
			<AboutDialog />
			<div className="absolute left-[758px] top-[1114px] w-[87px] h-[42px] flex flex-col items-center justify-center bg-[#1b2f40] text-white text-[15px] leading-[22px]">
				<span>9:39</span>
				<span>2018/4/17</span>
			</div>
		</div>
	);
}
